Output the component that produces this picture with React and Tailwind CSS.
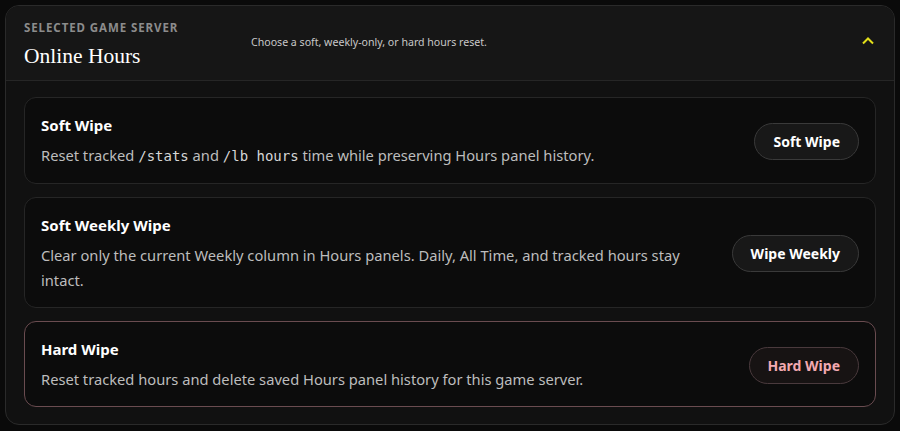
import React from "react";

const sans = { fontFamily: '"Noto Sans", "Open Sans", sans-serif' };

function Card({ title, children, button, danger }) {
  return (
    <div
      className={`flex items-center justify-between gap-6 rounded-[12px] border bg-[#0c0c0c] pl-[16px] pr-[16px] pt-[16px] pb-[14px] ${
        danger ? "border-[#6a4c50]" : "border-[#262626]"
      }`}
    >
      <div className="flex flex-col">
        <div className="text-[15px] font-bold leading-[22px] text-white">{title}</div>
        <div className="mt-[7px] text-[14.7px] leading-[25px] text-[#bdbdbd]">{children}</div>
      </div>
      <button
        className={`shrink-0 h-[37px] rounded-full border px-[18px] text-[14px] font-bold ${
          danger
            ? "border-[#4a3a3d] bg-[#171313] text-[#f2a9b0]"
            : "border-[#3a3a3a] bg-[#181818] text-white"
        }`}
        style={sans}
      >
        {button}
      </button>
    </div>
  );
}

const mono = "font-['DejaVu_Sans_Mono',monospace] text-[14px] text-[#d6d6d6]";

export default function App() {
  return (
    <div className="min-h-screen bg-[#0a0a0a] p-[5px]" style={sans}>
      <div className="overflow-hidden rounded-[14px] border border-[#2a2a2a] bg-[#111111]">
        <div className="flex h-[75px] items-center border-b border-[#262626] bg-[#161616] pl-[18px] pr-[18px]">
          <div className="flex w-[227px] flex-col pt-[3px]">
            <div className="text-[11.5px] font-bold uppercase tracking-[0.08em] leading-[14px] text-[#8c8c8c]">
              Selected Game Server
            </div>
            <div className="mt-[9px] font-['Liberation_Serif',serif] text-[21.5px] leading-[24px] text-white">
              Online Hours
            </div>
          </div>
          <div className="flex-1 pb-[1px] text-[10.6px] text-[#c8c8c8]">
            Choose a soft, weekly-only, or hard hours reset.
          </div>
          <svg width="14" height="10" viewBox="0 0 14 10" className="mr-[1px] mb-[4px]">
            <path d="M2 7.5 L7 2.5 L12 7.5" fill="none" stroke="#e3df1a" strokeWidth="2" />
          </svg>
        </div>
        <div className="flex flex-col gap-[13px] px-[18px] pt-[16px] pb-[17px]">
          <Card title="Soft Wipe" button="Soft Wipe">
            Reset tracked <span className={mono}>/stats</span> and{" "}
            <span className={mono}>/lb hours</span> time while preserving Hours panel history.
          </Card>
          <Card title="Soft Weekly Wipe" button="Wipe Weekly">
            <span className="block max-w-[660px]">
              Clear only the current Weekly column in Hours panels. Daily, All Time, and tracked hours stay intact.
            </span>
          </Card>
          <Card title="Hard Wipe" button="Hard Wipe" danger>
            Reset tracked hours and delete saved Hours panel history for this game server.
          </Card>
        </div>
      </div>
    </div>
  );
}
